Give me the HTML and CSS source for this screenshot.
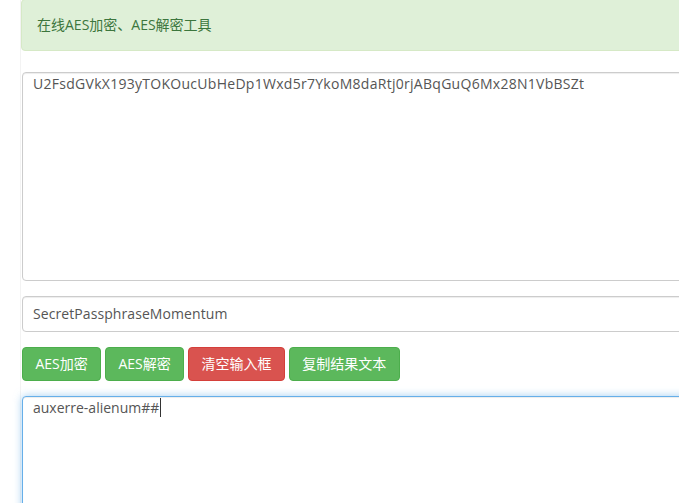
FILE: index.html
```html
<!DOCTYPE html>
<html lang="zh-CN">
<head>
<meta charset="utf-8">
<title>AES加密解密</title>
<link rel="stylesheet" href="styles.css">
</head>
<body>
<div class="page">
  <div class="alert">在线AES加密、AES解密工具</div>
  <div class="form">
    <div class="control area cipher">U2FsdGVkX193yTOKOucUbHeDp1Wxd5r7YkoM8daRtj0rjABqGuQ6Mx28N1VbBSZt</div>
    <div class="control input">SecretPassphraseMomentum</div>
    <div class="buttons">
      <button class="btn btn-green">AES加密</button>
      <button class="btn btn-green">AES解密</button>
      <button class="btn btn-red">清空输入框</button>
      <button class="btn btn-green">复制结果文本</button>
    </div>
    <div class="control area focus">auxerre-alienum##<span class="caret"></span></div>
  </div>
</div>
</body>
</html>
```
FILE: styles.css
```css
html, body {
  margin: 0;
  padding: 0;
  background: #fff;
  overflow: hidden;
}
body {
  font-family: "Open Sans", "Noto Sans CJK SC", sans-serif;
  font-size: 14px;
  line-height: 20px;
  color: #555;
}
.page {
  margin-left: 20px;
  width: 720px;
  min-height: 520px;
  border-left: 1px solid #f3f3f3;
}
.alert {
  margin-top: -1px;
  padding: 15px;
  background: #dff0d8;
  border: 1px solid #d6e9c6;
  border-radius: 4px;
  color: #3c763d;
}
.form {
  padding-left: 1px;
  padding-top: 21px;
  display: flex;
  flex-direction: column;
  gap: 15px;
}
.control {
  box-sizing: border-box;
  border: 1px solid #ccc;
  border-radius: 4px;
  box-shadow: inset 0 1px 1px rgba(0,0,0,.075);
  padding: 0 10px;
  color: #555;
  background: #fff;
  white-space: nowrap;
}
.area {
  height: 209px;
  padding-top: 1px;
}
.cipher {
  letter-spacing: 0.28px;
}
.input {
  height: 36px;
  line-height: 34px;
  letter-spacing: 0.08px;
}
.focus {
  border-color: #66afe9;
  box-shadow: inset 0 1px 1px rgba(0,0,0,.075), 0 0 8px rgba(102,175,233,.6);
}
.caret {
  display: inline-block;
  width: 1px;
  height: 19px;
  background: #333;
  vertical-align: -4px;
  margin-left: 1px;
}
.buttons {
  display: flex;
  gap: 4px;
}
.btn {
  font: inherit;
  height: 34px;
  padding: 0 12.4px;
  border: 1px solid;
  border-radius: 4px;
  color: #fff;
  cursor: pointer;
}
.btn-green {
  background: #5cb85c;
  border-color: #4cae4c;
}
.btn-red {
  background: #d9534f;
  border-color: #d43f3a;
}
```
